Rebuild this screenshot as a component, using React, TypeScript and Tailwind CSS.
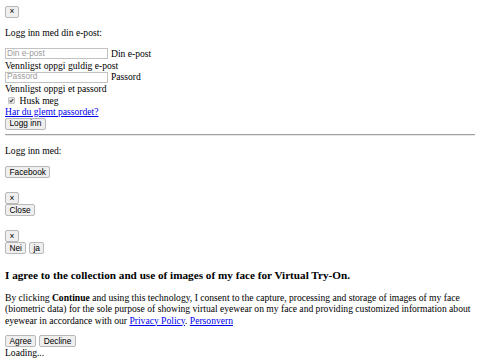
import React from "react";

const serif = "font-['Liberation_Serif',serif]";

const Btn: React.FC<{ children: React.ReactNode }> = ({ children }) => (
    <button className="inline-flex items-center h-[12px] px-[3.5px] text-[8.3px] leading-[9px] font-['Liberation_Sans',Arial,sans-serif] text-black bg-[#efefef] border border-[#b8b8b8] rounded-[2px]">
        {children}
    </button>
);

const Field: React.FC<{ placeholder: string; label: string; type?: string }> = ({ placeholder, label, type = "text" }) => (
    <div className="flex items-center h-[12px] gap-[3px]">
        <input
            type={type}
            placeholder={placeholder}
            className="w-[103px] h-[11px] px-[1px] text-[8.3px] font-['Liberation_Sans',Arial,sans-serif] border border-[#c2c2c2] bg-white placeholder:text-[#9c9c9c]"
        />
        <span className="leading-[11.5px]">{label}</span>
    </div>
);

export default function App() {
    return (
        <div className={`${serif} text-[9.6px] leading-[11.5px] text-black bg-white min-h-[360px] px-[5px] pt-[5px]`}>
            <Btn>×</Btn>
            <p className="mt-[9.5px]">Logg inn med din e-post:</p>
            <div className="mt-[9px] flex flex-col items-start">
                <Field placeholder="Din e-post" label="Din e-post" />
                <div>Vennligst oppgi guldig e-post</div>
                <Field placeholder="Passord" label="Passord" type="password" />
                <div>Vennligst oppgi et passord</div>
                <div className="flex items-center gap-[5px] pl-[2.5px]">
                    <span className="w-[7px] h-[7px] bg-[#e6e6e6] border border-[#c4c4c4] rounded-[1px] flex items-center justify-center">
                        <svg viewBox="0 0 10 10" className="w-[5px] h-[5px]">
                            <path d="M1.5 5.2 L4 7.8 L8.5 2" fill="none" stroke="#444" strokeWidth="2.2" />
                        </svg>
                    </span>
                    <span>Husk meg</span>
                </div>
                <a className="text-[#0000ee] underline">Har du glemt passordet?</a>
                <Btn>Logg inn</Btn>
            </div>
            <hr className="mt-[4px] border-t border-t-[#a0a0a0] border-b border-b-[#e8e8e8]" />
            <p className="mt-[9.5px]">Logg inn med:</p>
            <div className="mt-[9.5px] flex">
                <Btn>Facebook</Btn>
            </div>
            <div className="mt-[14px] flex flex-col items-start">
                <Btn>×</Btn>
                <Btn>Close</Btn>
            </div>
            <div className="mt-[14px] flex flex-col items-start">
                <Btn>×</Btn>
                <div className="flex gap-[2.5px]">
                    <Btn>Nei</Btn>
                    <Btn>ja</Btn>
                </div>
            </div>
            <h3 className="mt-[14.5px] text-[11.2px] leading-[13px] font-bold">
                I agree to the collection and use of images of my face for Virtual Try-On.
            </h3>
            <p className="mt-[10px]">
                By clicking <b>Continue</b> and using this technology, I consent to the capture, processing and storage of images of my face (biometric data) for the sole purpose of showing virtual eyewear on my face and providing customized information about eyewear in accordance with our{" "}
                <a className="text-[#0000ee] underline">Privacy Policy</a>.{" "}
                <a className="text-[#0000ee] underline">Personvern</a>
            </p>
            <div className="mt-[9px] flex gap-[3px]">
                <Btn>Agree</Btn>
                <Btn>Decline</Btn>
            </div>
            <div>Loading...</div>
        </div>
    );
}
